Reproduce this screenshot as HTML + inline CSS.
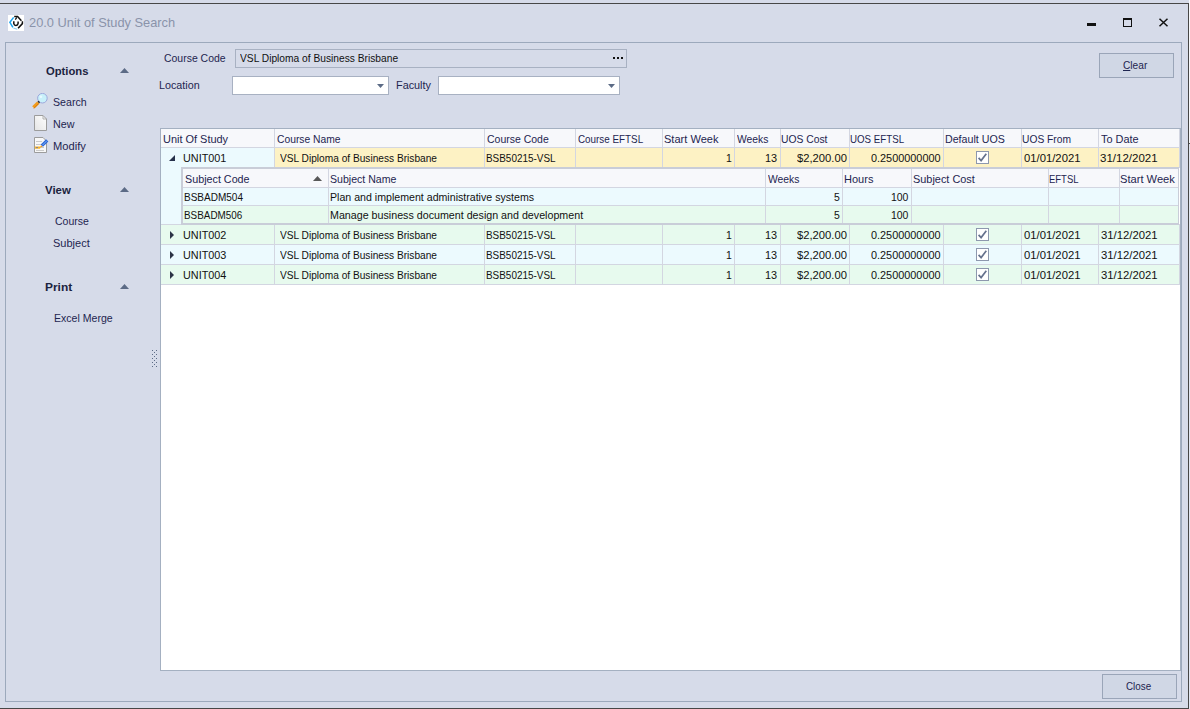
<!DOCTYPE html><html><head><meta charset="utf-8"><style>
html,body{margin:0;padding:0;}
body{width:1190px;height:709px;position:relative;overflow:hidden;background:#d6dbe9;font-family:"Liberation Sans", sans-serif;}
div,svg{position:absolute;box-sizing:border-box;}
.t{white-space:nowrap;line-height:13px;font-size:11px;}
</style></head><body>
<div style="left:0px;top:3px;width:1189px;height:1px;background:#474747"></div>
<div style="left:1188px;top:3px;width:1px;height:706px;background:#474747"></div>
<div style="left:0px;top:708px;width:1189px;height:1px;background:#474747"></div>
<div style="left:1189px;top:0px;width:1px;height:143px;background:#f8f9fb"></div>
<div style="left:1189px;top:143px;width:1px;height:1px;background:#555"></div>
<div style="left:1189px;top:144px;width:1px;height:565px;background:#e2e7f1"></div>
<svg style="left:8px;top:15px" width="16" height="16" viewBox="0 0 16 16">
<rect width="16" height="16" fill="#fff"/>
<path d="M5.6 2.4 L1.9 7.3 L4.9 12.3" stroke="#1aa3ef" stroke-width="1.5" fill="none"/>
<path d="M5.4 13 L9.3 14.3" stroke="#8fd0f2" stroke-width="1.2" fill="none"/>
<path d="M6.2 1.6 L9.6 1.6 L13.4 5.8" stroke="#111" stroke-width="1.5" fill="none"/>
<path d="M7.3 4.6 L8.8 2.4" stroke="#111" stroke-width="1.3" fill="none"/>
<path d="M14.4 6.2 L14.4 8.6 L10.1 13.3" stroke="#111" stroke-width="1.5" fill="none"/>
<path d="M5.8 6.2 L5.8 8.6 Q6.2 10.5 8 10.4 Q9.9 10.3 10.1 8.4 L10.1 6.5" stroke="#111" stroke-width="1.5" fill="none"/>
</svg>
<div style="left:1087px;top:23px;width:9px;height:3px;background:#111"></div>
<div style="left:1123px;top:18px;width:9px;height:9px;border:1px solid #111;border-top-width:2px"></div>
<svg style="left:1158px;top:18px" width="11" height="9" viewBox="0 0 11 9">
<path d="M1.5 0.8 L9.5 8.2 M9.5 0.8 L1.5 8.2" stroke="#111" stroke-width="1.5"/></svg>
<div style="left:5px;top:42px;width:1177px;height:660px;border:1px solid #9ca9bc"></div>
<svg style="left:120px;top:68px" width="9" height="5" viewBox="0 0 9 5"><path d="M0 5 L4.5 0 L9 5Z" fill="#5c6b86"/></svg>
<svg style="left:120px;top:187px" width="9" height="5" viewBox="0 0 9 5"><path d="M0 5 L4.5 0 L9 5Z" fill="#5c6b86"/></svg>
<svg style="left:120px;top:284px" width="9" height="5" viewBox="0 0 9 5"><path d="M0 5 L4.5 0 L9 5Z" fill="#5c6b86"/></svg>
<svg style="left:32px;top:93px" width="16" height="16" viewBox="0 0 16 16">
<circle cx="10.4" cy="5.2" r="4.8" fill="#c8f0fa" stroke="#9da8dc" stroke-width="1"/>
<circle cx="8.9" cy="3.8" r="1.3" fill="#e8f9ff"/>
<path d="M1.3 14.4 L6.2 9.6" stroke="#f29a1a" stroke-width="3.2"/>
<path d="M1.9 15.4 L6.9 10.4" stroke="#c8700a" stroke-width="0.8"/>
<path d="M6.3 9.5 L7.3 8.5" stroke="#2a2a2a" stroke-width="2.2"/>
</svg>
<svg style="left:33px;top:115px" width="15" height="17" viewBox="0 0 15 17">
<defs><linearGradient id="pg" x1="1" y1="0" x2="0" y2="1"><stop offset="0" stop-color="#fff"/><stop offset="1" stop-color="#e4e4e4"/></linearGradient></defs>
<path d="M1.5 0.5 L10 0.5 L13.5 4 L13.5 15.5 L1.5 15.5 Z" fill="url(#pg)" stroke="#9c9c9c" stroke-width="1"/>
<path d="M10 0.5 L10 4 L13.5 4" fill="none" stroke="#a8a8a8" stroke-width="0.9"/>
</svg>
<svg style="left:33px;top:137px" width="16" height="17" viewBox="0 0 16 17">
<path d="M1.5 0.5 L10 0.5 L13.5 4 L13.5 15.5 L1.5 15.5 Z" fill="#f8f8f8" stroke="#9c9c9c" stroke-width="1"/>
<path d="M3 4.5 H9 M3 7.5 H10 M3 10.5 H11 M3 13.5 H11" stroke="#c4c4c4" stroke-width="0.9"/>
<path d="M1.8 10.6 L7.2 10.6" stroke="#f7b32a" stroke-width="2.2" fill="none"/>
<path d="M6.6 10.8 L8.2 8.2 L9.8 9.6 Z" fill="#f59a10"/>
<path d="M3 10.6 H5" stroke="#6a78a8" stroke-width="0.9"/>
<path d="M8.9 8.6 L14.2 3.4" stroke="#2b66d8" stroke-width="3.2"/>
<path d="M9.3 8.3 L13.8 3.8" stroke="#8dbaf5" stroke-width="0.9"/>
</svg>
<div style="left:152px;top:350px;width:1px;height:1px;background:#5c6b86"></div>
<div style="left:156px;top:350px;width:1px;height:1px;background:#5c6b86"></div>
<div style="left:154px;top:352px;width:1px;height:1px;background:#5c6b86"></div>
<div style="left:152px;top:354px;width:1px;height:1px;background:#5c6b86"></div>
<div style="left:156px;top:354px;width:1px;height:1px;background:#5c6b86"></div>
<div style="left:154px;top:356px;width:1px;height:1px;background:#5c6b86"></div>
<div style="left:152px;top:358px;width:1px;height:1px;background:#5c6b86"></div>
<div style="left:156px;top:358px;width:1px;height:1px;background:#5c6b86"></div>
<div style="left:154px;top:360px;width:1px;height:1px;background:#5c6b86"></div>
<div style="left:152px;top:362px;width:1px;height:1px;background:#5c6b86"></div>
<div style="left:156px;top:362px;width:1px;height:1px;background:#5c6b86"></div>
<div style="left:154px;top:364px;width:1px;height:1px;background:#5c6b86"></div>
<div style="left:152px;top:366px;width:1px;height:1px;background:#5c6b86"></div>
<div style="left:156px;top:366px;width:1px;height:1px;background:#5c6b86"></div>
<div style="left:235px;top:49px;width:392px;height:19px;border:1px solid #a8b1c2;background:#d6dbe9"></div>
<div style="left:613px;top:57px;width:2px;height:2px;background:#111"></div>
<div style="left:617px;top:57px;width:2px;height:2px;background:#111"></div>
<div style="left:621px;top:57px;width:2px;height:2px;background:#111"></div>
<div style="left:232px;top:76px;width:157px;height:19px;border:1px solid #a8b1c2;background:#fff"></div>
<svg style="left:377px;top:84px" width="7" height="4" viewBox="0 0 7 4"><path d="M0 0 L7 0 L3.5 4Z" fill="#5c6b86"/></svg>
<div style="left:438px;top:76px;width:182px;height:19px;border:1px solid #a8b1c2;background:#fff"></div>
<svg style="left:608px;top:84px" width="7" height="4" viewBox="0 0 7 4"><path d="M0 0 L7 0 L3.5 4Z" fill="#5c6b86"/></svg>
<div style="left:1099px;top:53px;width:75px;height:25px;border:1px solid #9aa5b8;background:#d0d7e5"></div>
<div style="left:1102px;top:674px;width:75px;height:25px;border:1px solid #9aa5b8;background:#d0d7e5"></div>
<div style="left:160px;top:128px;width:1021px;height:543px;border:1px solid #a4b0c1;background:#fff"></div>
<div style="left:161px;top:129px;width:1019px;height:18px;background:#f7f8fb"></div>
<div style="left:161px;top:147px;width:1019px;height:1px;background:#d3d6e1"></div>
<div style="left:274px;top:129px;width:1px;height:18px;background:#d3d6e1"></div>
<div style="left:484px;top:129px;width:1px;height:18px;background:#d3d6e1"></div>
<div style="left:575px;top:129px;width:1px;height:18px;background:#d3d6e1"></div>
<div style="left:662px;top:129px;width:1px;height:18px;background:#d3d6e1"></div>
<div style="left:734px;top:129px;width:1px;height:18px;background:#d3d6e1"></div>
<div style="left:780px;top:129px;width:1px;height:18px;background:#d3d6e1"></div>
<div style="left:849px;top:129px;width:1px;height:18px;background:#d3d6e1"></div>
<div style="left:943px;top:129px;width:1px;height:18px;background:#d3d6e1"></div>
<div style="left:1021px;top:129px;width:1px;height:18px;background:#d3d6e1"></div>
<div style="left:1098px;top:129px;width:1px;height:18px;background:#d3d6e1"></div>
<div style="left:1179px;top:129px;width:1px;height:18px;background:#d3d6e1"></div>
<div style="left:161px;top:148px;width:1018px;height:19px;background:#ecfafe"></div>
<div style="left:275px;top:148px;width:904px;height:19px;background:#fdf2c4"></div>
<div style="left:161px;top:167px;width:1019px;height:1px;background:#d3d6e1"></div>
<div style="left:274px;top:148px;width:1px;height:19px;background:#d3d6e1"></div>
<div style="left:484px;top:148px;width:1px;height:19px;background:#d3d6e1"></div>
<div style="left:575px;top:148px;width:1px;height:19px;background:#d3d6e1"></div>
<div style="left:662px;top:148px;width:1px;height:19px;background:#d3d6e1"></div>
<div style="left:734px;top:148px;width:1px;height:19px;background:#d3d6e1"></div>
<div style="left:780px;top:148px;width:1px;height:19px;background:#d3d6e1"></div>
<div style="left:849px;top:148px;width:1px;height:19px;background:#d3d6e1"></div>
<div style="left:943px;top:148px;width:1px;height:19px;background:#d3d6e1"></div>
<div style="left:1021px;top:148px;width:1px;height:19px;background:#d3d6e1"></div>
<div style="left:1098px;top:148px;width:1px;height:19px;background:#d3d6e1"></div>
<div style="left:1179px;top:148px;width:1px;height:19px;background:#d3d6e1"></div>
<svg style="left:169px;top:155px" width="6" height="6" viewBox="0 0 6 6"><path d="M0 6 L6 0 L6 6Z" fill="#26304a"/></svg>
<div style="left:976px;top:151px;width:13px;height:13px;border:1px solid #8d98ae;background:#fff"></div>
<svg style="left:977px;top:152px" width="11" height="11" viewBox="0 0 11 11"><path d="M1.6 5.9 L4.1 8.6 L9.3 1.8" stroke="#65728d" stroke-width="1.7" fill="none"/></svg>
<div style="left:161px;top:225px;width:1018px;height:19px;background:#e7faee"></div>
<div style="left:161px;top:244px;width:1019px;height:1px;background:#d3d6e1"></div>
<div style="left:274px;top:225px;width:1px;height:19px;background:#d3d6e1"></div>
<div style="left:484px;top:225px;width:1px;height:19px;background:#d3d6e1"></div>
<div style="left:575px;top:225px;width:1px;height:19px;background:#d3d6e1"></div>
<div style="left:662px;top:225px;width:1px;height:19px;background:#d3d6e1"></div>
<div style="left:734px;top:225px;width:1px;height:19px;background:#d3d6e1"></div>
<div style="left:780px;top:225px;width:1px;height:19px;background:#d3d6e1"></div>
<div style="left:849px;top:225px;width:1px;height:19px;background:#d3d6e1"></div>
<div style="left:943px;top:225px;width:1px;height:19px;background:#d3d6e1"></div>
<div style="left:1021px;top:225px;width:1px;height:19px;background:#d3d6e1"></div>
<div style="left:1098px;top:225px;width:1px;height:19px;background:#d3d6e1"></div>
<div style="left:1179px;top:225px;width:1px;height:19px;background:#d3d6e1"></div>
<svg style="left:170px;top:231px" width="4" height="8" viewBox="0 0 4 8"><path d="M0 0 L4 4 L0 8Z" fill="#2b3345"/></svg>
<div style="left:976px;top:228px;width:13px;height:13px;border:1px solid #8d98ae;background:#fff"></div>
<svg style="left:977px;top:229px" width="11" height="11" viewBox="0 0 11 11"><path d="M1.6 5.9 L4.1 8.6 L9.3 1.8" stroke="#65728d" stroke-width="1.7" fill="none"/></svg>
<div style="left:161px;top:245px;width:1018px;height:19px;background:#ecfafe"></div>
<div style="left:161px;top:264px;width:1019px;height:1px;background:#d3d6e1"></div>
<div style="left:274px;top:245px;width:1px;height:19px;background:#d3d6e1"></div>
<div style="left:484px;top:245px;width:1px;height:19px;background:#d3d6e1"></div>
<div style="left:575px;top:245px;width:1px;height:19px;background:#d3d6e1"></div>
<div style="left:662px;top:245px;width:1px;height:19px;background:#d3d6e1"></div>
<div style="left:734px;top:245px;width:1px;height:19px;background:#d3d6e1"></div>
<div style="left:780px;top:245px;width:1px;height:19px;background:#d3d6e1"></div>
<div style="left:849px;top:245px;width:1px;height:19px;background:#d3d6e1"></div>
<div style="left:943px;top:245px;width:1px;height:19px;background:#d3d6e1"></div>
<div style="left:1021px;top:245px;width:1px;height:19px;background:#d3d6e1"></div>
<div style="left:1098px;top:245px;width:1px;height:19px;background:#d3d6e1"></div>
<div style="left:1179px;top:245px;width:1px;height:19px;background:#d3d6e1"></div>
<svg style="left:170px;top:251px" width="4" height="8" viewBox="0 0 4 8"><path d="M0 0 L4 4 L0 8Z" fill="#2b3345"/></svg>
<div style="left:976px;top:248px;width:13px;height:13px;border:1px solid #8d98ae;background:#fff"></div>
<svg style="left:977px;top:249px" width="11" height="11" viewBox="0 0 11 11"><path d="M1.6 5.9 L4.1 8.6 L9.3 1.8" stroke="#65728d" stroke-width="1.7" fill="none"/></svg>
<div style="left:161px;top:265px;width:1018px;height:19px;background:#e7faee"></div>
<div style="left:161px;top:284px;width:1019px;height:1px;background:#d3d6e1"></div>
<div style="left:274px;top:265px;width:1px;height:19px;background:#d3d6e1"></div>
<div style="left:484px;top:265px;width:1px;height:19px;background:#d3d6e1"></div>
<div style="left:575px;top:265px;width:1px;height:19px;background:#d3d6e1"></div>
<div style="left:662px;top:265px;width:1px;height:19px;background:#d3d6e1"></div>
<div style="left:734px;top:265px;width:1px;height:19px;background:#d3d6e1"></div>
<div style="left:780px;top:265px;width:1px;height:19px;background:#d3d6e1"></div>
<div style="left:849px;top:265px;width:1px;height:19px;background:#d3d6e1"></div>
<div style="left:943px;top:265px;width:1px;height:19px;background:#d3d6e1"></div>
<div style="left:1021px;top:265px;width:1px;height:19px;background:#d3d6e1"></div>
<div style="left:1098px;top:265px;width:1px;height:19px;background:#d3d6e1"></div>
<div style="left:1179px;top:265px;width:1px;height:19px;background:#d3d6e1"></div>
<svg style="left:170px;top:271px" width="4" height="8" viewBox="0 0 4 8"><path d="M0 0 L4 4 L0 8Z" fill="#2b3345"/></svg>
<div style="left:976px;top:268px;width:13px;height:13px;border:1px solid #8d98ae;background:#fff"></div>
<svg style="left:977px;top:269px" width="11" height="11" viewBox="0 0 11 11"><path d="M1.6 5.9 L4.1 8.6 L9.3 1.8" stroke="#65728d" stroke-width="1.7" fill="none"/></svg>
<div style="left:161px;top:167px;width:1018px;height:57px;background:#ecfafe"></div>
<div style="left:161px;top:224px;width:1019px;height:1px;background:#d3d6e1"></div>
<div style="left:181px;top:167px;width:998px;height:58px;border:2px solid #c9cdd8;border-right-width:1px;background:#fff"></div>
<div style="left:183px;top:169px;width:995px;height:18px;background:#f7f8fb"></div>
<div style="left:183px;top:187px;width:995px;height:1px;background:#d3d6e1"></div>
<div style="left:328px;top:169px;width:1px;height:18px;background:#d3d6e1"></div>
<div style="left:765px;top:169px;width:1px;height:18px;background:#d3d6e1"></div>
<div style="left:842px;top:169px;width:1px;height:18px;background:#d3d6e1"></div>
<div style="left:911px;top:169px;width:1px;height:18px;background:#d3d6e1"></div>
<div style="left:1048px;top:169px;width:1px;height:18px;background:#d3d6e1"></div>
<div style="left:1119px;top:169px;width:1px;height:18px;background:#d3d6e1"></div>
<svg style="left:313px;top:176px" width="9" height="5" viewBox="0 0 9 5"><path d="M0 5 L4.5 0 L9 5Z" fill="#585858"/></svg>
<div style="left:183px;top:188px;width:995px;height:17px;background:#ecfafe"></div>
<div style="left:183px;top:205px;width:995px;height:1px;background:#d3d6e1"></div>
<div style="left:328px;top:188px;width:1px;height:17px;background:#d3d6e1"></div>
<div style="left:765px;top:188px;width:1px;height:17px;background:#d3d6e1"></div>
<div style="left:842px;top:188px;width:1px;height:17px;background:#d3d6e1"></div>
<div style="left:911px;top:188px;width:1px;height:17px;background:#d3d6e1"></div>
<div style="left:1048px;top:188px;width:1px;height:17px;background:#d3d6e1"></div>
<div style="left:1119px;top:188px;width:1px;height:17px;background:#d3d6e1"></div>
<div style="left:183px;top:206px;width:995px;height:17px;background:#e7faee"></div>
<div style="left:328px;top:206px;width:1px;height:17px;background:#d3d6e1"></div>
<div style="left:765px;top:206px;width:1px;height:17px;background:#d3d6e1"></div>
<div style="left:842px;top:206px;width:1px;height:17px;background:#d3d6e1"></div>
<div style="left:911px;top:206px;width:1px;height:17px;background:#d3d6e1"></div>
<div style="left:1048px;top:206px;width:1px;height:17px;background:#d3d6e1"></div>
<div style="left:1119px;top:206px;width:1px;height:17px;background:#d3d6e1"></div>
<div class="t" style="left:28.74px;top:16px;letter-spacing:0.000px;color:#8a93aa;font-size:13px;transform:scaleX(0.9867);transform-origin:0 0;">20.0 Unit of Study Search</div>
<div class="t" style="left:45.50px;top:65px;letter-spacing:0.000px;color:#1b2340;font-weight:bold;transform:scaleX(1.0204);transform-origin:0 0;">Options</div>
<div class="t" style="left:53.32px;top:96px;letter-spacing:0.000px;color:#1e2550;transform:scaleX(0.9663);transform-origin:0 0;">Search</div>
<div class="t" style="left:53.32px;top:118px;letter-spacing:0.000px;color:#1e2550;transform:scaleX(0.9765);transform-origin:0 0;">New</div>
<div class="t" style="left:53.32px;top:140px;letter-spacing:0.000px;color:#1e2550;transform:scaleX(1.0131);transform-origin:0 0;">Modify</div>
<div class="t" style="left:45.42px;top:184px;letter-spacing:0.000px;color:#1b2340;font-weight:bold;transform:scaleX(1.0364);transform-origin:0 0;">View</div>
<div class="t" style="left:54.96px;top:215px;letter-spacing:0.000px;color:#1e2550;transform:scaleX(0.9555);transform-origin:0 0;">Course</div>
<div class="t" style="left:53.36px;top:237px;letter-spacing:0.000px;color:#1e2550;transform:scaleX(1.0003);transform-origin:0 0;">Subject</div>
<div class="t" style="left:44.70px;top:281px;letter-spacing:0.000px;color:#1b2340;font-weight:bold;transform:scaleX(1.0843);transform-origin:0 0;">Print</div>
<div class="t" style="left:53.74px;top:312px;letter-spacing:0.000px;color:#1e2550;transform:scaleX(0.9591);transform-origin:0 0;">Excel Merge</div>
<div class="t" style="left:163.50px;top:52px;letter-spacing:0.000px;color:#1e2550;transform:scaleX(0.9501);transform-origin:0 0;">Course Code</div>
<div class="t" style="left:239.50px;top:52px;letter-spacing:0.000px;color:#111111;transform:scaleX(0.9288);transform-origin:0 0;">VSL Diploma of Business Brisbane</div>
<div class="t" style="left:158.74px;top:79px;letter-spacing:0.000px;color:#1e2550;transform:scaleX(0.9772);transform-origin:0 0;">Location</div>
<div class="t" style="left:396.36px;top:79px;letter-spacing:0.000px;color:#1e2550;transform:scaleX(0.9863);transform-origin:0 0;">Faculty</div>
<div class="t" style="left:1122.50px;top:59px;letter-spacing:0.000px;color:#1e2550;transform:scaleX(0.9231);transform-origin:0 0;"><u>C</u>lear</div>
<div class="t" style="left:1125.54px;top:680px;letter-spacing:0.000px;color:#1e2550;transform:scaleX(0.8934);transform-origin:0 0;">Close</div>
<div class="t" style="left:162.74px;top:133px;letter-spacing:0.000px;color:#1e2550;transform:scaleX(0.9949);transform-origin:0 0;">Unit Of Study</div>
<div class="t" style="left:276.96px;top:133px;letter-spacing:0.000px;color:#1e2550;transform:scaleX(0.9366);transform-origin:0 0;">Course Name</div>
<div class="t" style="left:486.54px;top:133px;letter-spacing:0.000px;color:#1e2550;transform:scaleX(0.9529);transform-origin:0 0;">Course Code</div>
<div class="t" style="left:577.96px;top:133px;letter-spacing:0.000px;color:#1e2550;transform:scaleX(0.8955);transform-origin:0 0;">Course EFTSL</div>
<div class="t" style="left:663.74px;top:133px;letter-spacing:0.000px;color:#1e2550;transform:scaleX(1.0048);transform-origin:0 0;">Start Week</div>
<div class="t" style="left:737.00px;top:133px;letter-spacing:0.000px;color:#1e2550;transform:scaleX(0.9397);transform-origin:0 0;">Weeks</div>
<div class="t" style="left:781.28px;top:133px;letter-spacing:0.000px;color:#1e2550;transform:scaleX(0.9390);transform-origin:0 0;">UOS Cost</div>
<div class="t" style="left:850.28px;top:133px;letter-spacing:0.000px;color:#1e2550;transform:scaleX(0.8841);transform-origin:0 0;">UOS EFTSL</div>
<div class="t" style="left:944.70px;top:133px;letter-spacing:0.000px;color:#1e2550;transform:scaleX(0.9681);transform-origin:0 0;">Default UOS</div>
<div class="t" style="left:1022.32px;top:133px;letter-spacing:0.000px;color:#1e2550;transform:scaleX(0.9324);transform-origin:0 0;">UOS From</div>
<div class="t" style="left:1100.54px;top:133px;letter-spacing:0.000px;color:#1e2550;transform:scaleX(0.9929);transform-origin:0 0;">To Date</div>
<div class="t" style="left:184.78px;top:173px;letter-spacing:0.000px;color:#1e2550;transform:scaleX(0.9780);transform-origin:0 0;">Subject Code</div>
<div class="t" style="left:329.70px;top:173px;letter-spacing:0.000px;color:#1e2550;transform:scaleX(0.9608);transform-origin:0 0;">Subject Name</div>
<div class="t" style="left:768.04px;top:173px;letter-spacing:0.000px;color:#1e2550;transform:scaleX(0.9397);transform-origin:0 0;">Weeks</div>
<div class="t" style="left:843.70px;top:173px;letter-spacing:0.000px;color:#1e2550;transform:scaleX(1.0014);transform-origin:0 0;">Hours</div>
<div class="t" style="left:912.74px;top:173px;letter-spacing:0.000px;color:#1e2550;transform:scaleX(0.9914);transform-origin:0 0;">Subject Cost</div>
<div class="t" style="left:1049.28px;top:173px;letter-spacing:0.000px;color:#1e2550;transform:scaleX(0.8621);transform-origin:0 0;">EFTSL</div>
<div class="t" style="left:1120.28px;top:173px;letter-spacing:0.000px;color:#1e2550;transform:scaleX(1.0116);transform-origin:0 0;">Start Week</div>
<div class="t" style="left:183.74px;top:191px;letter-spacing:0.000px;color:#111111;transform:scaleX(0.9101);transform-origin:0 0;">BSBADM504</div>
<div class="t" style="left:329.74px;top:191px;letter-spacing:0.000px;color:#111111;transform:scaleX(0.9646);transform-origin:0 0;">Plan and implement administrative systems</div>
<div class="t" style="left:834.00px;top:191px;letter-spacing:0.000px;color:#111111;transform:scaleX(0.9500);transform-origin:0 0;">5</div>
<div class="t" style="left:891.20px;top:191px;letter-spacing:0.000px;color:#111111;transform:scaleX(0.9500);transform-origin:0 0;">100</div>
<div class="t" style="left:183.74px;top:209px;letter-spacing:0.000px;color:#111111;transform:scaleX(0.8988);transform-origin:0 0;">BSBADM506</div>
<div class="t" style="left:329.74px;top:209px;letter-spacing:0.000px;color:#111111;transform:scaleX(0.9716);transform-origin:0 0;">Manage business document design and development</div>
<div class="t" style="left:834.00px;top:209px;letter-spacing:0.000px;color:#111111;transform:scaleX(0.9500);transform-origin:0 0;">5</div>
<div class="t" style="left:891.20px;top:209px;letter-spacing:0.000px;color:#111111;transform:scaleX(0.9500);transform-origin:0 0;">100</div>
<div class="t" style="left:182.70px;top:152px;letter-spacing:0.000px;color:#111111;transform:scaleX(0.9843);transform-origin:0 0;">UNIT001</div>
<div class="t" style="left:280.00px;top:152px;letter-spacing:0.000px;color:#111111;transform:scaleX(0.9224);transform-origin:0 0;">VSL Diploma of Business Brisbane</div>
<div class="t" style="left:485.74px;top:152px;letter-spacing:0.000px;color:#111111;transform:scaleX(0.9025);transform-origin:0 0;">BSB50215-VSL</div>
<div class="t" style="left:725.78px;top:152px;letter-spacing:0.000px;color:#111111;transform:scaleX(0.9500);transform-origin:0 0;">1</div>
<div class="t" style="left:765.24px;top:152px;letter-spacing:0.000px;color:#111111;transform:scaleX(0.9896);transform-origin:0 0;">13</div>
<div class="t" style="left:797.00px;top:152px;letter-spacing:0.000px;color:#111111;transform:scaleX(1.0206);transform-origin:0 0;">$2,200.00</div>
<div class="t" style="left:871.00px;top:152px;letter-spacing:0.000px;color:#111111;transform:scaleX(0.9884);transform-origin:0 0;">0.2500000000</div>
<div class="t" style="left:1023.58px;top:152px;letter-spacing:0.000px;color:#111111;transform:scaleX(1.0258);transform-origin:0 0;">01/01/2021</div>
<div class="t" style="left:1099.74px;top:152px;letter-spacing:0.000px;color:#111111;transform:scaleX(1.0463);transform-origin:0 0;">31/12/2021</div>
<div class="t" style="left:182.70px;top:229px;letter-spacing:0.000px;color:#111111;transform:scaleX(0.9843);transform-origin:0 0;">UNIT002</div>
<div class="t" style="left:280.00px;top:229px;letter-spacing:0.000px;color:#111111;transform:scaleX(0.9224);transform-origin:0 0;">VSL Diploma of Business Brisbane</div>
<div class="t" style="left:485.74px;top:229px;letter-spacing:0.000px;color:#111111;transform:scaleX(0.9025);transform-origin:0 0;">BSB50215-VSL</div>
<div class="t" style="left:725.78px;top:229px;letter-spacing:0.000px;color:#111111;transform:scaleX(0.9500);transform-origin:0 0;">1</div>
<div class="t" style="left:765.24px;top:229px;letter-spacing:0.000px;color:#111111;transform:scaleX(0.9896);transform-origin:0 0;">13</div>
<div class="t" style="left:797.00px;top:229px;letter-spacing:0.000px;color:#111111;transform:scaleX(1.0206);transform-origin:0 0;">$2,200.00</div>
<div class="t" style="left:871.00px;top:229px;letter-spacing:0.000px;color:#111111;transform:scaleX(0.9884);transform-origin:0 0;">0.2500000000</div>
<div class="t" style="left:1023.58px;top:229px;letter-spacing:0.000px;color:#111111;transform:scaleX(1.0258);transform-origin:0 0;">01/01/2021</div>
<div class="t" style="left:1100.54px;top:229px;letter-spacing:0.000px;color:#111111;transform:scaleX(1.0291);transform-origin:0 0;">31/12/2021</div>
<div class="t" style="left:182.70px;top:249px;letter-spacing:0.000px;color:#111111;transform:scaleX(0.9843);transform-origin:0 0;">UNIT003</div>
<div class="t" style="left:280.00px;top:249px;letter-spacing:0.000px;color:#111111;transform:scaleX(0.9224);transform-origin:0 0;">VSL Diploma of Business Brisbane</div>
<div class="t" style="left:485.74px;top:249px;letter-spacing:0.000px;color:#111111;transform:scaleX(0.9025);transform-origin:0 0;">BSB50215-VSL</div>
<div class="t" style="left:725.78px;top:249px;letter-spacing:0.000px;color:#111111;transform:scaleX(0.9500);transform-origin:0 0;">1</div>
<div class="t" style="left:765.24px;top:249px;letter-spacing:0.000px;color:#111111;transform:scaleX(0.9896);transform-origin:0 0;">13</div>
<div class="t" style="left:797.00px;top:249px;letter-spacing:0.000px;color:#111111;transform:scaleX(1.0206);transform-origin:0 0;">$2,200.00</div>
<div class="t" style="left:871.00px;top:249px;letter-spacing:0.000px;color:#111111;transform:scaleX(0.9884);transform-origin:0 0;">0.2500000000</div>
<div class="t" style="left:1023.58px;top:249px;letter-spacing:0.000px;color:#111111;transform:scaleX(1.0258);transform-origin:0 0;">01/01/2021</div>
<div class="t" style="left:1100.54px;top:249px;letter-spacing:0.000px;color:#111111;transform:scaleX(1.0291);transform-origin:0 0;">31/12/2021</div>
<div class="t" style="left:182.70px;top:269px;letter-spacing:0.000px;color:#111111;transform:scaleX(0.9837);transform-origin:0 0;">UNIT004</div>
<div class="t" style="left:280.00px;top:269px;letter-spacing:0.000px;color:#111111;transform:scaleX(0.9224);transform-origin:0 0;">VSL Diploma of Business Brisbane</div>
<div class="t" style="left:485.74px;top:269px;letter-spacing:0.000px;color:#111111;transform:scaleX(0.9025);transform-origin:0 0;">BSB50215-VSL</div>
<div class="t" style="left:725.78px;top:269px;letter-spacing:0.000px;color:#111111;transform:scaleX(0.9500);transform-origin:0 0;">1</div>
<div class="t" style="left:765.24px;top:269px;letter-spacing:0.000px;color:#111111;transform:scaleX(0.9896);transform-origin:0 0;">13</div>
<div class="t" style="left:797.00px;top:269px;letter-spacing:0.000px;color:#111111;transform:scaleX(1.0206);transform-origin:0 0;">$2,200.00</div>
<div class="t" style="left:871.00px;top:269px;letter-spacing:0.000px;color:#111111;transform:scaleX(0.9884);transform-origin:0 0;">0.2500000000</div>
<div class="t" style="left:1023.58px;top:269px;letter-spacing:0.000px;color:#111111;transform:scaleX(1.0258);transform-origin:0 0;">01/01/2021</div>
<div class="t" style="left:1100.54px;top:269px;letter-spacing:0.000px;color:#111111;transform:scaleX(1.0291);transform-origin:0 0;">31/12/2021</div>
</body></html>
